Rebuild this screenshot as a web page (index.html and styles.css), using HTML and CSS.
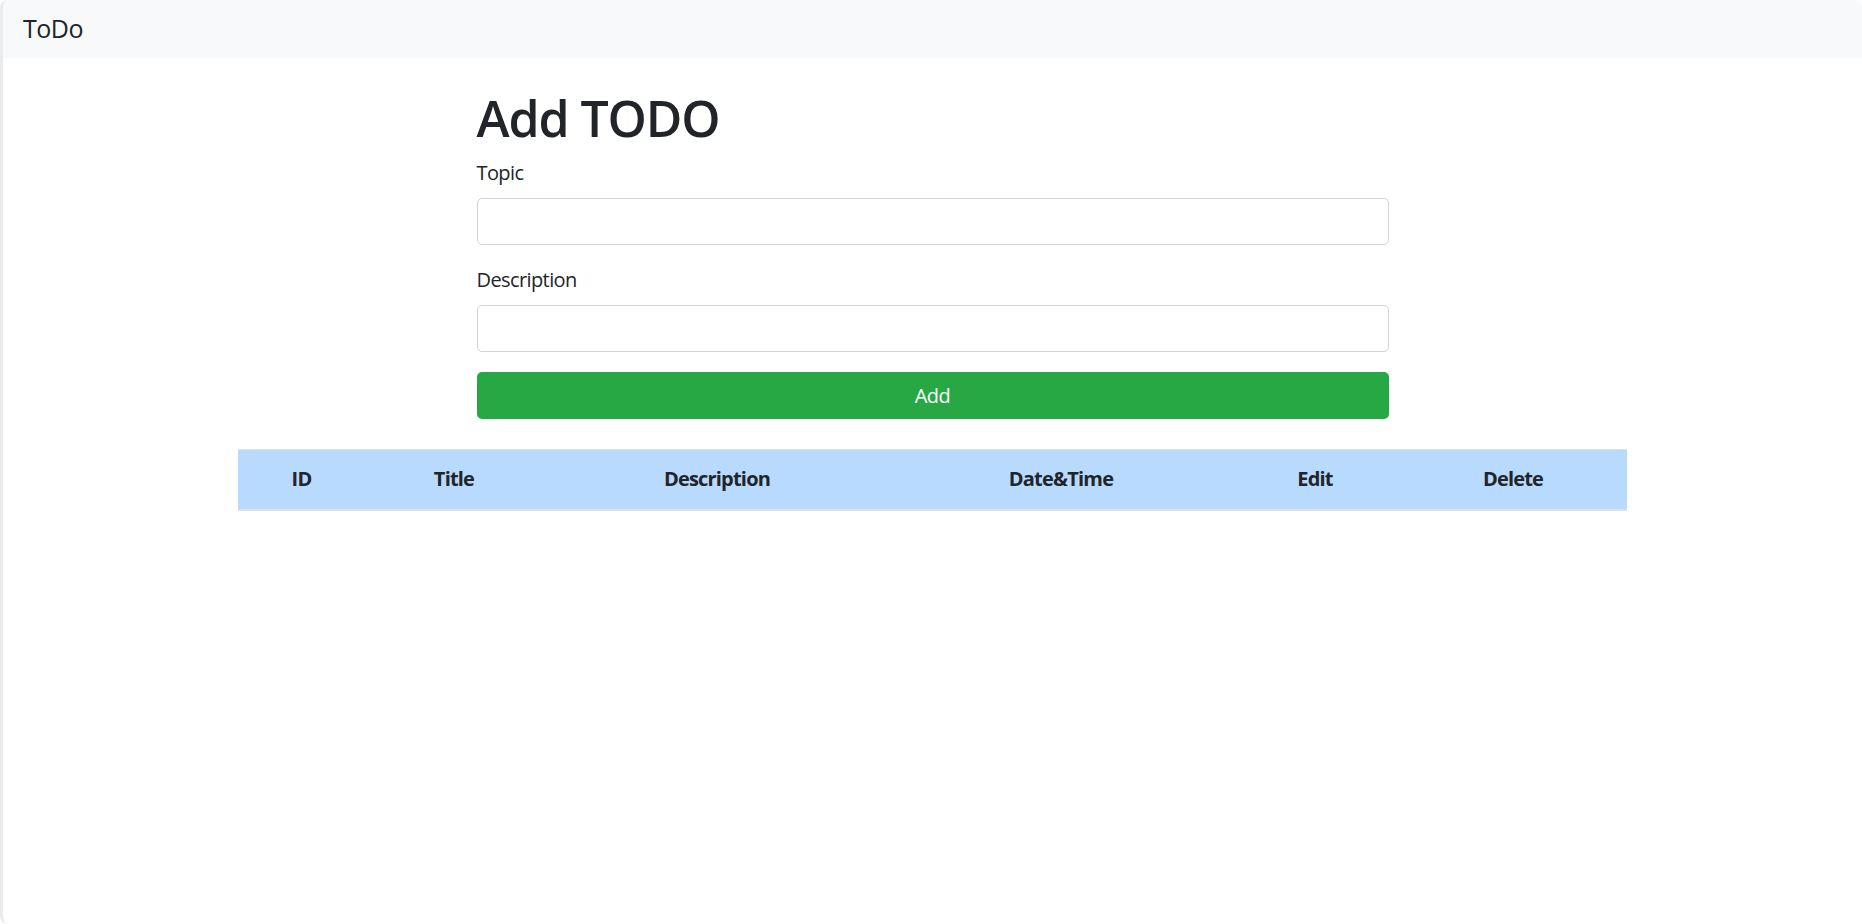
FILE: index.html
```html
<!DOCTYPE html>
<html lang="en">
<head>
<meta charset="utf-8">
<title>ToDo</title>
<link rel="stylesheet" href="styles.css">
</head>
<body>
<div class="app">
  <nav class="navbar">
    <span class="brand">ToDo</span>
  </nav>
  <main class="content">
    <form class="todo-form">
      <h1 class="title">Add TODO</h1>
      <div class="field">
        <label class="label" for="topic">Topic</label>
        <input class="input" id="topic" type="text">
      </div>
      <div class="field">
        <label class="label" for="desc">Description</label>
        <input class="input" id="desc" type="text">
      </div>
      <button class="btn-add" type="button">Add</button>
    </form>
    <table class="todo-table">
      <colgroup>
        <col class="c-id">
        <col class="c-title">
        <col class="c-desc">
        <col class="c-date">
        <col class="c-edit">
        <col class="c-del">
      </colgroup>
      <thead>
        <tr>
          <th>ID</th>
          <th>Title</th>
          <th>Description</th>
          <th>Date&amp;Time</th>
          <th>Edit</th>
          <th>Delete</th>
        </tr>
      </thead>
      <tbody></tbody>
    </table>
  </main>
</div>
</body>
</html>
```
FILE: styles.css
```css
* { box-sizing: border-box; }

html, body {
  margin: 0;
  padding: 0;
  background: #ffffff;
}

body {
  font-family: "Open Sans", "Noto Sans", sans-serif;
  color: #212529;
}

.app {
  height: 924px;
  border-left: 3px solid #ebebeb;
  border-radius: 8px 8px 0 8px;
  overflow: hidden;
  background: #fff;
}

.navbar {
  height: 58px;
  background: #f8f9fa;
  display: flex;
  align-items: center;
  padding: 0 20px;
}

.brand {
  font-size: 25px;
  line-height: 30px;
  letter-spacing: -0.02em;
  color: #212529;
  margin-top: -3px;
}

.content {
  display: flex;
  flex-direction: column;
  align-items: center;
  padding-top: 30px;
}

.todo-form {
  width: 912px;
  display: flex;
  flex-direction: column;
}

.title {
  margin: 0 0 10px 0;
  font-size: 50px;
  font-weight: 600;
  line-height: 60px;
  letter-spacing: -0.022em;
}

.field {
  display: flex;
  flex-direction: column;
  margin-bottom: 20px;
}

.label {
  font-size: 20px;
  line-height: 30px;
  margin-bottom: 10px;
  letter-spacing: -0.03em;
}

.input {
  height: 47px;
  border: 1px solid #ced4da;
  border-radius: 5px;
  background: #fff;
  font: inherit;
  font-size: 20px;
  padding: 0 15px;
}

.btn-add {
  height: 47px;
  border: none;
  border-radius: 5px;
  background: #28a745;
  color: #fff;
  font-family: inherit;
  font-size: 20px;
  letter-spacing: -0.03em;
  cursor: pointer;
}

.todo-table {
  margin-top: 30px;
  width: 1389px;
  table-layout: fixed;
  border-collapse: collapse;
}

.c-id { width: 127px; }
.c-title { width: 178px; }
.c-desc { width: 348px; }
.c-date { width: 340px; }
.c-edit { width: 168px; }
.c-del { width: 228px; }

.todo-table th {
  background: #b8daff;
  font-size: 20px;
  font-weight: 700;
  line-height: 30px;
  padding: 14px 15px 15px;
  text-align: center;
  border-top: 1px solid #dee2e6;
  border-bottom: 2px solid #dee2e6;
  letter-spacing: -0.04em;
}
```
